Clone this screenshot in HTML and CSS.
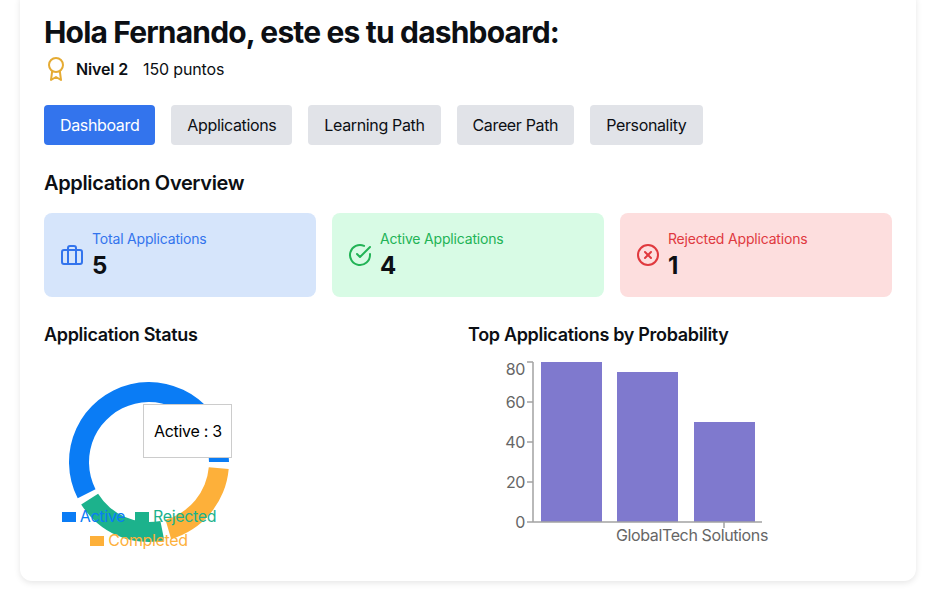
FILE: index.html
```html
<!DOCTYPE html>
<html lang="es">
<head>
    <meta charset="UTF-8">
    <meta name="viewport" content="width=device-width, initial-scale=1.0">
    <title>Dashboard</title>
    <link rel="stylesheet" href="styles.css">
</head>
<body>

    <div class="panel">
        <!-- Header section -->
        <h1 class="title">Hola Fernando, este es tu dashboard:</h1>
        <div class="level">
            <svg class="icon icon-award" viewBox="0 0 24 24">
                <circle cx="12" cy="8" r="7"></circle>
                <polyline points="8.21 13.89 7 23 12 20 17 23 15.79 13.88"></polyline>
            </svg>
            <span class="level-name">Nivel 2</span>
            <span class="level-points">150 puntos</span>
        </div>

        <!-- Tabs -->
        <div class="tabs">
            <button class="tab tab-active">Dashboard</button>
            <button class="tab">Applications</button>
            <button class="tab">Learning Path</button>
            <button class="tab">Career Path</button>
            <button class="tab">Personality</button>
        </div>

        <!-- Overview cards -->
        <h2 class="section-title">Application Overview</h2>
        <div class="stats">
            <div class="stat stat-blue">
                <svg class="icon" viewBox="0 0 24 24">
                    <rect x="2" y="7" width="20" height="14" rx="2" ry="2"></rect>
                    <path d="M16 21V5a2 2 0 0 0-2-2h-4a2 2 0 0 0-2 2v16"></path>
                </svg>
                <div>
                    <p class="stat-label">Total Applications</p>
                    <p class="stat-value">5</p>
                </div>
            </div>
            <div class="stat stat-green">
                <svg class="icon" viewBox="0 0 24 24">
                    <path d="M22 11.08V12a10 10 0 1 1-5.93-9.14"></path>
                    <polyline points="22 4 12 14.01 9 11.01"></polyline>
                </svg>
                <div>
                    <p class="stat-label">Active Applications</p>
                    <p class="stat-value">4</p>
                </div>
            </div>
            <div class="stat stat-red">
                <svg class="icon" viewBox="0 0 24 24">
                    <circle cx="12" cy="12" r="10"></circle>
                    <line x1="15" y1="9" x2="9" y2="15"></line>
                    <line x1="9" y1="9" x2="15" y2="15"></line>
                </svg>
                <div>
                    <p class="stat-label">Rejected Applications</p>
                    <p class="stat-value">1</p>
                </div>
            </div>
        </div>

        <!-- Charts -->
        <div class="charts">
            <div>
                <h3 class="chart-title">Application Status</h3>
                <div class="chart">
                    <svg class="chart-svg" viewBox="44 349 400 208">
                        <path fill="#0a7cf5" d="M229 462A80 80 0 1 0 77.7 498.3L95.5 489.2A60 60 0 1 1 209 462Z"></path>
                        <path fill="#1cb28c" d="M81.2 504.4A80 80 0 0 0 164.3 540.6L160.4 520.9A60 60 0 0 1 98.1 493.8Z"></path>
                        <path fill="#fdb03a" d="M171.1 538.9A80 80 0 0 0 228.7 469L208.8 467.2A60 60 0 0 1 165.5 519.7Z"></path>
                    </svg>
                    <div class="tooltip">Active : 3</div>
                    <div class="legend">
                        <span class="legend-item legend-blue"><i class="legend-mark"></i>Active</span>
                        <span class="legend-item legend-green"><i class="legend-mark"></i>Rejected</span>
                        <span class="legend-item legend-orange"><i class="legend-mark"></i>Completed</span>
                    </div>
                </div>
            </div>
            <div>
                <h3 class="chart-title">Top Applications by Probability</h3>
                <div class="chart">
                    <svg class="chart-svg" viewBox="468 349 400 208">
                        <rect class="bar" x="541" y="362" width="61" height="160"></rect>
                        <rect class="bar" x="617" y="372" width="61" height="150"></rect>
                        <rect class="bar" x="694" y="422" width="61" height="100"></rect>
                        <path class="axis" d="M533 362V522M527 522H762M527 362H533M527 402H533M527 442H533M527 482H533M724 522V528"></path>
                        <text class="tick" x="525" y="375" text-anchor="end">80</text>
                        <text class="tick" x="525" y="408" text-anchor="end">60</text>
                        <text class="tick" x="525" y="448" text-anchor="end">40</text>
                        <text class="tick" x="525" y="488" text-anchor="end">20</text>
                        <text class="tick" x="525" y="528" text-anchor="end">0</text>
                        <text class="tick" x="692" y="541" text-anchor="middle">GlobalTech Solutions</text>
                    </svg>
                </div>
            </div>
        </div>
    </div>

</body>
</html>
```

FILE: styles.css
```css
body {
    font-family: Inter, "Liberation Sans", sans-serif;
    margin: 0;
    background-color: #ffffff;
    color: #0c0f14;
    overflow: hidden;
}

p {
    margin: 0;
}

.panel {
    margin: -10px 24px 15px 20px;
    padding: 24px;
    background-color: white;
    border-radius: 12px;
    box-shadow: 0 2px 6px rgba(0, 0, 0, 0.1);
}

.title {
    margin: 0;
    font-size: 30px;
    line-height: 36px;
    font-weight: 700;
    letter-spacing: -0.83px;
}

.icon {
    width: 24px;
    height: 24px;
    flex-shrink: 0;
    fill: none;
    stroke: currentColor;
    stroke-width: 2;
    stroke-linecap: round;
    stroke-linejoin: round;
}

.icon-award {
    color: #e5ab33;
}

.level {
    display: flex;
    align-items: center;
    margin-top: 7px;
    margin-bottom: 24px;
    font-size: 16px;
    line-height: 24px;
    letter-spacing: -0.15px;
}

.level-name {
    margin-left: 8px;
    font-weight: 600;
}

.level-points {
    margin-left: 15px;
}

.tabs {
    display: flex;
    gap: 16px;
    margin-bottom: 24px;
}

.tab {
    padding: 0 16px;
    height: 40px;
    font-family: inherit;
    font-size: 16px;
    letter-spacing: -0.355px;
    color: #0c0f14;
    background-color: #e1e3e8;
    border: none;
    border-radius: 4px;
    cursor: pointer;
}

.tab-active {
    background-color: #3374ed;
    color: white;
}

.section-title {
    margin: 0 0 16px;
    font-size: 20px;
    line-height: 28px;
    font-weight: 600;
    letter-spacing: -0.35px;
}

.stats {
    display: grid;
    grid-template-columns: repeat(3, 1fr);
    gap: 16px;
    margin-bottom: 24px;
}

.stat {
    display: flex;
    align-items: center;
    gap: 8px;
    padding: 16px;
    border-radius: 8px;
}

.stat-blue {
    background-color: #d6e5fb;
    color: #3374ed;
}

.stat-green {
    background-color: #d8fbe5;
    color: #22b356;
}

.stat-red {
    background-color: #fddede;
    color: #e0393e;
}

.stat-label {
    font-size: 14px;
    line-height: 20px;
    letter-spacing: -0.18px;
}

.stat-value {
    margin-top: 1px;
    font-size: 24px;
    line-height: 31px;
    font-weight: 700;
    color: #0c0f14;
}

.charts {
    display: grid;
    grid-template-columns: 1fr 1fr;
}

.chart-title {
    margin: 0;
    font-size: 18px;
    line-height: 28px;
    font-weight: 600;
    letter-spacing: -0.32px;
}

.chart {
    position: relative;
    height: 208px;
}

.chart-svg {
    display: block;
    width: 400px;
    height: 208px;
}

.bar {
    fill: #7f79ce;
}

.axis {
    fill: none;
    stroke: #a3a3a3;
    stroke-width: 1.5;
}

.tick {
    font-size: 16px;
    letter-spacing: -0.38px;
    fill: #666666;
}

.tooltip {
    position: absolute;
    left: 99px;
    top: 55px;
    width: 89px;
    height: 54px;
    box-sizing: border-box;
    padding: 0 10px;
    line-height: 52px;
    font-size: 16px;
    letter-spacing: -0.3px;
    white-space: nowrap;
    color: #000;
    background-color: white;
    border: 1px solid #cccccc;
}

.legend {
    position: absolute;
    left: 0;
    top: 156px;
    width: 190px;
    display: flex;
    flex-wrap: wrap;
    justify-content: center;
    column-gap: 10px;
    row-gap: 1px;
    font-size: 16px;
    line-height: 23px;
    letter-spacing: -0.35px;
}

.legend-item {
    display: flex;
    align-items: center;
    gap: 4px;
    color: var(--mark);
}

.legend-mark {
    width: 14px;
    height: 10px;
    background-color: var(--mark);
}

.legend-blue {
    --mark: #0a7cf5;
}

.legend-green {
    --mark: #1cb28c;
}

.legend-orange {
    --mark: #fdb03a;
}
```
